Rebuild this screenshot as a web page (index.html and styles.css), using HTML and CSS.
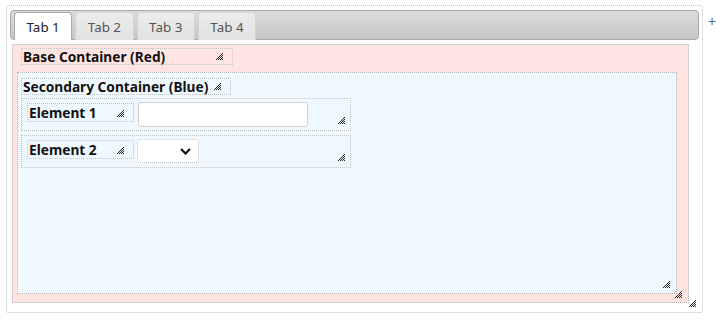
FILE: index.html
```html
<!DOCTYPE html>
<html>

<head>
    <meta charset="UTF-8">
    <meta name="viewport" content="width=device-width, initial-scale=1.0">
    <title>Layout Editor</title>
    <link rel="stylesheet" href="styles.css">
</head>

<body>

    <svg width="0" height="0" class="defs">
        <defs>
            <pattern id="dots" width="2" height="2" patternUnits="userSpaceOnUse">
                <rect x="0" y="0" width="1" height="1" fill="#222"/>
                <rect x="1" y="1" width="1" height="1" fill="#222"/>
            </pattern>
        </defs>
    </svg>

    <div class="tabs">
        <ul class="tab-nav">
            <li class="tab active">Tab 1</li>
            <li class="tab">Tab 2</li>
            <li class="tab">Tab 3</li>
            <li class="tab">Tab 4</li>
        </ul>

        <div class="box red">
            <div class="caption cap-red">Base Container (Red)
                <svg class="grip" width="8" height="8"><polygon points="8,0 8,8 0,8" fill="url(#dots)"/></svg>
            </div>

            <div class="box blue">
                <div class="caption cap-blue">Secondary Container (Blue)
                    <svg class="grip" width="8" height="8"><polygon points="8,0 8,8 0,8" fill="url(#dots)"/></svg>
                </div>

                <div class="row">
                    <div class="caption cap-el">Element 1
                        <svg class="grip" width="8" height="8"><polygon points="8,0 8,8 0,8" fill="url(#dots)"/></svg>
                    </div>
                    <input type="text" class="field">
                    <svg class="grip" width="8" height="8"><polygon points="8,0 8,8 0,8" fill="url(#dots)"/></svg>
                </div>

                <div class="row row2">
                    <div class="caption cap-el">Element 2
                        <svg class="grip" width="8" height="8"><polygon points="8,0 8,8 0,8" fill="url(#dots)"/></svg>
                    </div>
                    <div class="pick">
                        <svg width="11" height="7" viewBox="0 0 11 7"><path d="M1 1 L5.5 5.5 L10 1" fill="none" stroke="#111" stroke-width="2.2"/></svg>
                    </div>
                    <svg class="grip" width="8" height="8"><polygon points="8,0 8,8 0,8" fill="url(#dots)"/></svg>
                </div>

                <svg class="grip" width="8" height="8"><polygon points="8,0 8,8 0,8" fill="url(#dots)"/></svg>
            </div>

            <svg class="grip" width="8" height="8"><polygon points="8,0 8,8 0,8" fill="url(#dots)"/></svg>
        </div>

        <svg class="grip" width="8" height="8"><polygon points="8,0 8,8 0,8" fill="url(#dots)"/></svg>
    </div>

    <span class="add">+</span>

</body>
</html>
```

FILE: styles.css
```css
*{
    margin: 0px;
    padding: 0px;
    box-sizing: border-box;
}
body{
    display: flex;
    align-items: flex-start;
    font-family: "Noto Sans", "Open Sans", sans-serif;
    font-size: 13px;
    color: #111;
    background: #fff;
}
.defs{
    position: absolute;
}
.grip{
    position: absolute;
    right: 6px;
    bottom: 5px;
    shape-rendering: crispEdges;
}
.tabs{
    position: relative;
    width: 697px;
    height: 308px;
    margin: 5px 0px 0px 6px;
    padding: 4px 3px;
    border: 1px dotted #bdbdbd;
    border-radius: 3px;
}
.tab-nav{
    display: flex;
    align-items: flex-end;
    gap: 3px;
    height: 30px;
    padding: 1px 3px 0px;
    list-style: none;
    border: 1px solid #a8a8a8;
    border-radius: 4px;
    background: linear-gradient(#dcdcdc, #c6c6c6);
}
.tab{
    display: flex;
    align-items: center;
    justify-content: center;
    height: 28px;
    margin-bottom: -1px;
    padding: 0px 11.5px 0px;
    font-size: 13.4px;
    color: #555;
    background: linear-gradient(#ececec, #e2e2e2);
    border: 1px solid #d3d3d3;
    border-bottom: none;
    border-radius: 4px 4px 0px 0px;
}
.tab.active{
    color: #212121;
    background: #fff;
    border-color: #aaa;
}
.box{
    position: relative;
    border: 1px dotted #b5b5b5;
}
.red{
    width: 677px;
    height: 259px;
    margin: 4px 0px 0px 2px;
    padding: 3px 0px 0px 8px;
    background: #ffe4e1;
}
.red > .grip{
    bottom: 4px;
}
.blue{
    width: 660px;
    height: 222px;
    margin: 7px 0px 0px -4px;
    padding: 5px 0px 0px 3px;
    background: #f0f8ff;
}
.caption{
    position: relative;
    height: 17px;
    padding-left: 1px;
    font-size: 13.7px;
    font-weight: bold;
    line-height: 15px;
    border: 1px dotted #c4c4c4;
}
.caption .grip{
    right: 9px;
    bottom: 4px;
}
.cap-red{
    width: 212px;
}
.cap-blue{
    width: 210px;
}
.cap-el{
    width: 107px;
    height: 19px;
    margin-top: 1px;
    padding-left: 1px;
    line-height: 17px;
}
.row{
    position: relative;
    display: flex;
    align-items: flex-start;
    gap: 4px;
    width: 330px;
    height: 33px;
    margin-top: 3px;
    padding: 3px 0px 0px 5px;
    border: 1px dotted #c4c4c4;
}
.row2{
    margin-top: 4px;
    gap: 3px;
}
.row > .grip{
    right: 5px;
    bottom: 6px;
}
.field{
    width: 170px;
    height: 25px;
    margin-top: 0px;
    border: 1px solid #cfcfcf;
    border-radius: 3px;
    background: #fff;
}
.pick{
    display: flex;
    align-items: center;
    justify-content: flex-end;
    width: 62px;
    height: 24px;
    padding-right: 7px;
    border: 1px dotted #c8c8c8;
    border-radius: 3px;
    background: #fff;
}
.add{
    margin: 15px 0px 0px 5px;
    font-size: 14px;
    line-height: 14px;
    color: #4e6aa0;
}
```
